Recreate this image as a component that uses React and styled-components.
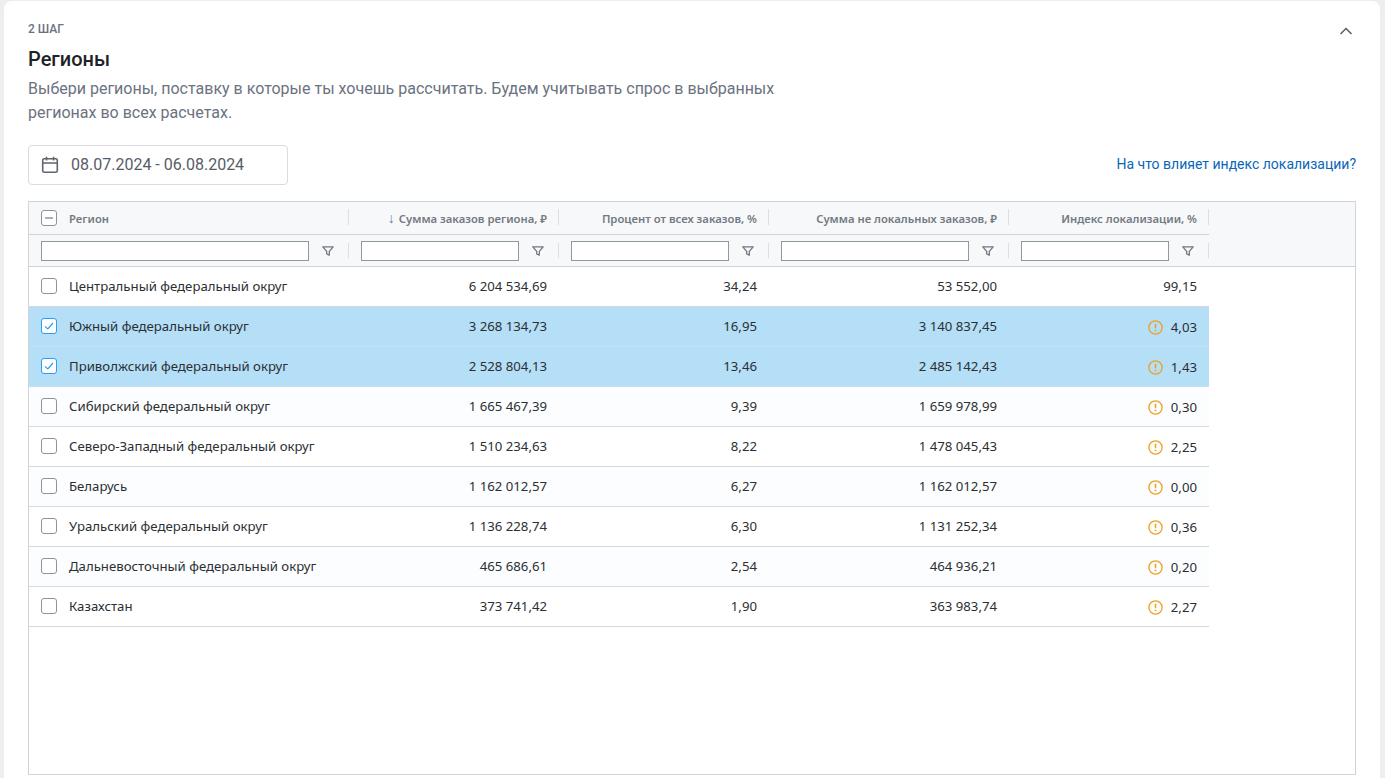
import styled, { createGlobalStyle } from "styled-components";

const GlobalStyle = createGlobalStyle`
  html, body {
    margin: 0;
    height: 100%;
    overflow: hidden;
    background: #eeeeee;
  }
  * {
    box-sizing: border-box;
  }
`;

const Page = styled.div`
  height: 778px;
  padding: 1px 5px 0 4px;
  overflow: hidden;
`;

const Card = styled.section`
  position: relative;
  height: 800px;
  padding: 21px 24px 0;
  background: #fff;
  border-radius: 8px 8px 0 0;
  font-family: Roboto, sans-serif;
`;

const Step = styled.div`
  font-size: 12px;
  line-height: 14px;
  font-weight: 500;
  color: #6b7280;
`;

const Collapse = styled.button`
  position: absolute;
  top: 20px;
  right: 24px;
  width: 20px;
  height: 20px;
  padding: 0;
  display: flex;
  align-items: center;
  justify-content: center;
  background: none;
  border: 0;
`;

const Title = styled.h2`
  margin: 11px 0 0;
  font-size: 20px;
  line-height: 24px;
  font-weight: 500;
  color: #1f2328;
`;

const Description = styled.p`
  width: 770px;
  margin: 6px 0 0;
  font-size: 16px;
  line-height: 24px;
  color: #6b7280;
`;

const Controls = styled.div`
  display: flex;
  align-items: center;
  justify-content: space-between;
  margin-top: 20px;
`;

const DateField = styled.div`
  display: flex;
  align-items: center;
  gap: 12px;
  width: 260px;
  height: 40px;
  padding: 0 12px 1px;
  border: 1px solid #d9dbde;
  border-radius: 4px;
  font-size: 16px;
  color: #565d66;
`;

const HelpLink = styled.a`
  margin-bottom: 2px;
  font-size: 14px;
  color: #0a66b7;
`;

const Grid = styled.div`
  height: 574px;
  margin-top: 16px;
  border: 1px solid #cfd4da;
  font-family: "Noto Sans", sans-serif;
  font-size: 13.2px;
  color: #2b2f33;
  overflow: hidden;
`;

const HeaderArea = styled.div`
  background: #f7f8fa;
  border-bottom: 1px solid #cfd4da;
`;

const HeaderRow = styled.div`
  display: flex;
  width: 1180px;
  height: ${(p) => p.$height}px;
  border-bottom: ${(p) => (p.$divided ? "1px solid #cfd4da" : "0")};
`;

const HeaderCell = styled.div`
  position: relative;
  display: flex;
  align-items: center;
  justify-content: ${(p) => (p.$first ? "flex-start" : "flex-end")};
  gap: 12px;
  width: ${(p) => p.$width}px;
  padding: 0 12px;
  font-size: 11.3px;
  font-weight: 600;
  color: #737a82;

  &::after {
    content: "";
    position: absolute;
    top: 7px;
    right: 0;
    width: 1px;
    height: 16px;
    background: #dcdfe3;
  }
`;

const SortArrow = styled.span`
  margin-right: -8px;
  font-size: 14px;
  line-height: 14px;
  font-weight: 400;
`;

const FilterCell = styled(HeaderCell)`
  gap: 0;
  justify-content: space-between;
  padding: 0 12px;

  &::after {
    top: 8px;
    height: 15px;
  }
`;

const FilterInput = styled.input`
  width: ${(p) => p.$width}px;
  height: 20px;
  padding: 0 4px;
  background: #fff;
  border: 1px solid #8f9a9c;
  border-radius: 0;
  outline: none;
`;

const FilterButton = styled.span`
  display: flex;
  width: 14px;
  height: 14px;
  margin-right: 2px;
`;

const Row = styled.div`
  display: flex;
  width: 1180px;
  height: 40px;
  background: ${(p) => (p.$selected ? "#b5def7" : p.$odd ? "#fcfdfe" : "#fff")};
  border-bottom: 1px solid ${(p) => (p.$selected ? "#c6e0f0" : "#d5d9dd")};
`;

const Cell = styled.div`
  display: flex;
  align-items: center;
  justify-content: ${(p) => (p.$first ? "flex-start" : "flex-end")};
  gap: ${(p) => (p.$first ? 12 : 8)}px;
  width: ${(p) => p.$width}px;
  padding: 0 12px ${(p) => (p.$low ? 0 : 2)}px;
  white-space: nowrap;
`;

const Box = styled.span`
  display: flex;
  flex: none;
  align-items: center;
  justify-content: center;
  width: 16px;
  height: 16px;
  background: #fff;
  border: 1.5px solid ${(p) => (p.$checked ? "#2a9df4" : "#8f9498")};
  border-radius: 3px;
`;

const WarningMark = styled.svg`
  display: block;
  margin-top: 1px;
`;

const widths = [320, 210, 210, 240, 200];
const inputs = [268, 158, 158, 188, 148];

const headers = [
  "Регион",
  "Сумма заказов региона, ₽",
  "Процент от всех заказов, %",
  "Сумма не локальных заказов, ₽",
  "Индекс локализации, %",
];

const rows = [
  ["Центральный федеральный округ", "6 204 534,69", "34,24", "53 552,00", "99,15"],
  ["Южный федеральный округ", "3 268 134,73", "16,95", "3 140 837,45", "4,03", true],
  ["Приволжский федеральный округ", "2 528 804,13", "13,46", "2 485 142,43", "1,43", true],
  ["Сибирский федеральный округ", "1 665 467,39", "9,39", "1 659 978,99", "0,30"],
  ["Северо-Западный федеральный округ", "1 510 234,63", "8,22", "1 478 045,43", "2,25"],
  ["Беларусь", "1 162 012,57", "6,27", "1 162 012,57", "0,00"],
  ["Уральский федеральный округ", "1 136 228,74", "6,30", "1 131 252,34", "0,36"],
  ["Дальневосточный федеральный округ", "465 686,61", "2,54", "464 936,21", "0,20"],
  ["Казахстан", "373 741,42", "1,90", "363 983,74", "2,27"],
];

const CalendarIcon = () => (
  <svg width="18" height="18" viewBox="0 0 18 18" fill="none" stroke="#5f666e" strokeWidth="1.6">
    <rect x="1.7" y="2.7" width="14.6" height="13.6" rx="1.6" />
    <path d="M1.7 7h14.6M5.5 0.8v3.6M12.5 0.8v3.6" />
  </svg>
);

const ChevronIcon = () => (
  <svg width="14" height="8" viewBox="0 0 14 8" fill="none" stroke="#565d66" strokeWidth="1.5">
    <path d="M1.5 7 7 1.5 12.5 7" />
  </svg>
);

const FilterIcon = () => (
  <svg width="14" height="14" viewBox="0 0 14 14" fill="none" stroke="#6f7880" strokeWidth="1.3" strokeLinejoin="round">
    <path d="M1.8 2.8h10.4L8.3 7.4v3.8L5.7 10V7.4z" />
  </svg>
);

const WarningIcon = () => (
  <WarningMark width="15" height="15" viewBox="0 0 15 15" fill="none" stroke="#efa023" strokeWidth="1.3">
    <circle cx="7.5" cy="7.5" r="6.6" />
    <path d="M7.5 3.8v4.4M7.5 9.8v1.4" strokeWidth="1.5" />
  </WarningMark>
);

const CheckIcon = () => (
  <svg width="12" height="12" viewBox="0 0 12 12" fill="none" stroke="#2a9df4" strokeWidth="1.2">
    <path d="M2 6.4 4.8 9 10 3" />
  </svg>
);

const MinusIcon = () => (
  <svg width="10" height="10" viewBox="0 0 10 10" fill="none" stroke="#80868c" strokeWidth="1.3">
    <path d="M1 5h8" />
  </svg>
);

const App = () => {
  return (
    <Page>
      <GlobalStyle />
      <Card>
        <Step>2 ШАГ</Step>
        <Collapse>
          <ChevronIcon />
        </Collapse>
        <Title>Регионы</Title>
        <Description>
          Выбери регионы, поставку в которые ты хочешь рассчитать. Будем учитывать спрос в выбранных регионах во всех расчетах.
        </Description>
        <Controls>
          <DateField>
            <CalendarIcon />
            08.07.2024 - 06.08.2024
          </DateField>
          <HelpLink>На что влияет индекс локализации?</HelpLink>
        </Controls>
        <Grid>
          <HeaderArea>
            <HeaderRow $height={33} $divided>
              {headers.map((title, i) => (
                <HeaderCell key={title} $width={widths[i]} $first={i === 0}>
                  {i === 0 && (
                    <Box>
                      <MinusIcon />
                    </Box>
                  )}
                  {i === 1 && <SortArrow>↓</SortArrow>}
                  {title}
                </HeaderCell>
              ))}
            </HeaderRow>
            <HeaderRow $height={31}>
              {widths.map((width, i) => (
                <FilterCell key={i} $width={width}>
                  <FilterInput $width={inputs[i]} />
                  <FilterButton>
                    <FilterIcon />
                  </FilterButton>
                </FilterCell>
              ))}
            </HeaderRow>
          </HeaderArea>
          {rows.map(([region, sum, percent, nonLocal, index, selected], i) => (
            <Row key={region} $selected={selected} $odd={i % 2 === 1}>
              <Cell $width={widths[0]} $first>
                <Box $checked={selected}>{selected && <CheckIcon />}</Box>
                {region}
              </Cell>
              <Cell $width={widths[1]}>{sum}</Cell>
              <Cell $width={widths[2]}>{percent}</Cell>
              <Cell $width={widths[3]}>{nonLocal}</Cell>
              <Cell $width={widths[4]} $low={i > 0}>
                {i > 0 && <WarningIcon />}
                {index}
              </Cell>
            </Row>
          ))}
        </Grid>
      </Card>
    </Page>
  );
};

export default App;
